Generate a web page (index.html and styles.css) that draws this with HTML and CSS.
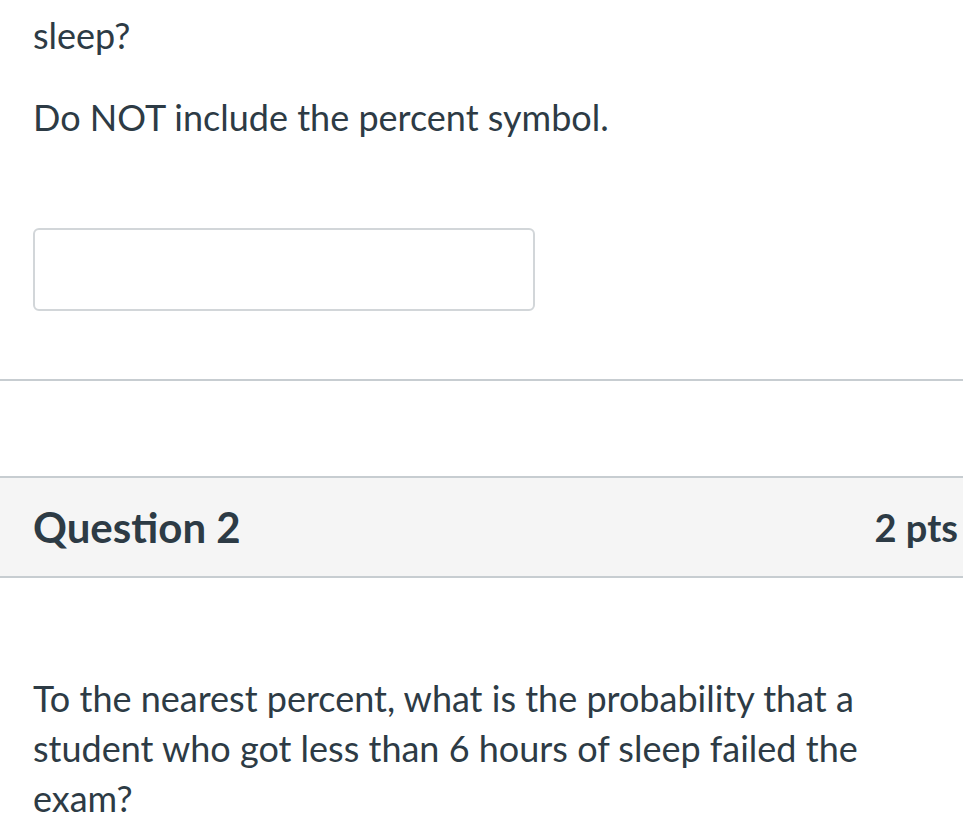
FILE: index.html
```html
<!DOCTYPE html>
<html lang="en">
<head>
<meta charset="utf-8">
<title>Quiz</title>
<link rel="stylesheet" href="styles.css">
</head>
<body>
<div class="page">
  <section class="q-body">
    <p class="q-text">sleep?</p>
    <p class="q-text note">Do NOT include the percent symbol.</p>
    <div class="answer"><input class="answer-input" type="text" aria-label="Answer"></div>
  </section>
  <hr class="divider">
  <section class="question">
    <header class="q-header">
      <h2 class="q-title">Question 2</h2>
      <span class="q-points">2 pts</span>
    </header>
    <div class="q-content">
      <p class="q-text">To the nearest percent, what is the probability that a student who got less than 6 hours of sleep failed the exam?</p>
    </div>
  </section>
</div>
</body>
</html>
```
FILE: styles.css
```css
* { box-sizing: border-box; }
html, body { margin: 0; padding: 0; background: #fff; }
body {
  font-family: Lato, "Open Sans", sans-serif;
  color: #2d3b45;
  width: 963px;
  height: 825px;
  overflow: hidden;
}
.page { display: flex; flex-direction: column; }
.q-body { padding: 10px 0 0 33px; }
.q-text {
  margin: 0;
  font-size: 36px;
  line-height: 50px;
  max-width: 870px;
}
.note { margin-top: 32px; }
.answer { margin-top: 86px; }
.answer-input {
  display: block;
  width: 502px;
  height: 83px;
  border: 2px solid #d2d6d9;
  border-radius: 6px;
  background: #fff;
  outline: none;
}
.divider {
  margin: 68px 0 0;
  border: 0;
  border-top: 2px solid #c7cdd1;
  height: 0;
}
.question { margin-top: 95px; }
.q-header {
  display: flex;
  justify-content: space-between;
  align-items: center;
  height: 102px;
  padding: 0 5px 0 33px;
  background: #f5f5f5;
  border-top: 2px solid #c7cdd1;
  border-bottom: 2px solid #c7cdd1;
}
.q-title {
  margin: 0;
  font-size: 42px;
  font-weight: 700;
}
.q-points {
  font-size: 38px;
  font-weight: 700;
}
.q-content { padding: 95px 0 0 33px; }
```
